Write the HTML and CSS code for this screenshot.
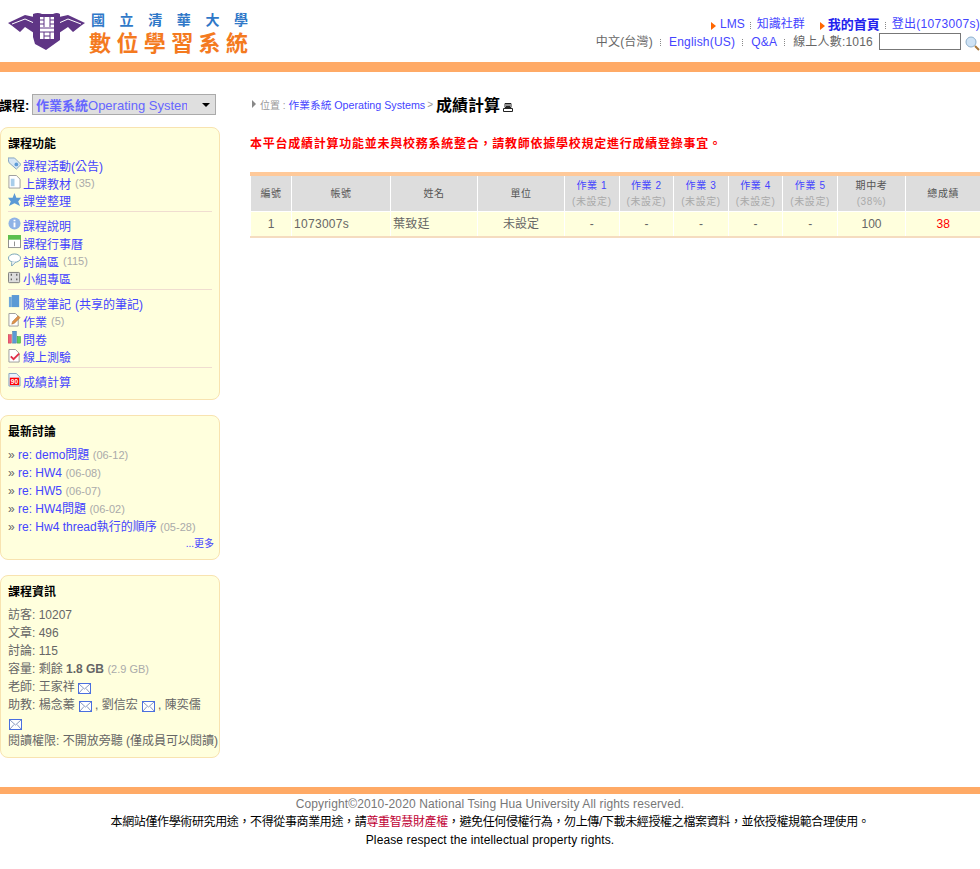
FILE: index.html
```html
<!DOCTYPE html>
<html lang="zh-Hant">
<head>
    <meta charset="UTF-8">
    <title>數位學習系統</title>
    <link rel="stylesheet" href="styles.css">
</head>
<body>
    <svg class="defs" width="0" height="0">
        <symbol id="mail" viewBox="0 0 13 11"><rect x="0.5" y="0.5" width="12" height="10" fill="#fff" stroke="#4a6fe0"/><path d="M1 1l5.500 5 5.500-5M1 10l4-4.500M12 10l-4-4.500" fill="none" stroke="#8a9ac0"/></symbol>
        <symbol id="arrow" viewBox="0 0 5 8"><path d="M0 0l5 4-5 4z" fill="#ff6600"/></symbol>
    </svg>

    <!-- header -->
    <div class="header">
        <div class="logo">
            <svg class="logo-mark" width="78" height="38" viewBox="0 0 78 38">
                <path d="M0 10L17 2 26 4V20L17 14 12 19 3 12z" fill="#5f3585"/>
                <path d="M77 10L60 2 51 4V20L60 14 65 19 74 12z" fill="#5f3585"/>
                <path d="M4 11L17 6 26 10M73 11L60 6 51 10" fill="none" stroke="#fff"/>
                <path d="M25 1Q30 -1 34 1H45Q49 -1 52 1V27L38 37 27 31 25 24z" fill="#5f3585"/>
                <rect x="32" y="4" width="14" height="22" fill="#fff"/>
                <path d="M36 4V14M42 4V14M32 7H36M32 11H36M42 7H46M42 11H46M32 15H46M32 19H46M36 19V26M42 19V26M36 23H42" stroke="#5f3585" fill="none"/>
            </svg>
            <div class="logo-text">
                <div class="logo-top"><span>國</span><span>立</span><span>清</span><span>華</span><span>大</span><span>學</span></div>
                <div class="logo-bottom"><span>數</span><span>位</span><span>學</span><span>習</span><span>系</span><span>統</span></div>
            </div>
        </div>
        <div class="top-right">
            <div class="top-line">
                <svg class="top-arrow" width="5" height="8"><use href="#arrow"/></svg>
                <a href="#">LMS</a><i class="dots"></i><a href="#">知識社群</a>
                <svg class="top-arrow second" width="5" height="8"><use href="#arrow"/></svg>
                <a href="#" class="strong">我的首頁</a><i class="dots"></i><a href="#" class="logout">登出(1073007s)</a>
            </div>
            <div class="top-line second-line">
                <span>中文(台灣)</span><i class="dots wide"></i><a href="#">English(US)</a><i class="dots wide"></i><a href="#">Q&amp;A</a><i class="dots wide"></i><span>線上人數:1016</span>
                <input class="search" type="text">
                <svg class="lens" width="15" height="15" viewBox="0 0 15 15"><circle cx="6" cy="6" r="5" fill="#cfe3f5" stroke="#8fb0cc"/><path d="M10 10l4 4" stroke="#a8763a" stroke-width="2"/></svg>
            </div>
        </div>
    </div>
    <div class="orange-bar"></div>

    <div class="page">
        <!-- left column -->
        <div class="sidebar">
            <div class="course-pick">
                <strong>課程:</strong>
                <div class="select"><span class="select-text"><b>作業系統</b>Operating Systems</span><span class="caret"></span></div>
            </div>

            <div class="box">
                <h4>課程功能</h4>
                <ul class="menu">
                    <li><svg class="ico" viewBox="1 1 14 15"><path d="M1 2h7l7 7-5 5-8-7z" fill="#d5e6f5" stroke="#7f9fbf"/><circle cx="10" cy="9" r="2" fill="#5b9ad5"/></svg><a href="#">課程活動(公告)</a></li>
                    <li><svg class="ico" viewBox="1 1 14 15"><path d="M2 1.500h8l4 4v9.500H2z" fill="#fff" stroke="#999"/><rect x="4" y="5" width="4" height="8" fill="#a8cdea"/></svg><a href="#">上課教材</a><span class="count">(35)</span></li>
                    <li class="last"><svg class="ico" viewBox="1 1 14 15"><path d="M8 1l2 5 5 0-3 4 2 5-6-3-6 3 2-5-3-4 5 0z" fill="#5b9ad5"/></svg><a href="#">課堂整理</a></li>
                    <li><svg class="ico" viewBox="1 1 14 15"><circle cx="8" cy="8" r="6.500" fill="#8fb3e6"/><path d="M8 7v5M8 4v1.500" stroke="#fff" stroke-width="2"/></svg><a href="#">課程說明</a></li>
                    <li><svg class="ico" viewBox="1 1 14 15"><rect x="1.500" y="1.500" width="13" height="13" fill="#fff" stroke="#888"/><rect x="1" y="1" width="14" height="5" fill="#5cc04c"/><path d="M8 8v5" stroke="#888"/></svg><a href="#">課程行事曆</a></li>
                    <li><svg class="ico" viewBox="1 1 14 15"><ellipse cx="8" cy="6.500" rx="6.500" ry="4.500" fill="#fff" stroke="#6f9fb5"/><path d="M5 11l0 4 4-4" fill="#fff" stroke="#6f9fb5"/></svg><a href="#">討論區</a><span class="count">(115)</span></li>
                    <li class="last"><svg class="ico" viewBox="1 1 14 15"><rect x="1.500" y="2.500" width="12" height="11" rx="1" fill="#ddd" stroke="#777"/><path d="M4 5h1M10 5h1M4 10h1M10 10h1" stroke="#333" stroke-width="2"/></svg><a href="#">小組專區</a></li>
                    <li><svg class="ico" viewBox="1 1 14 15"><path d="M2 3h3v11H2z" fill="#6fa8dc"/><path d="M5 1h8v13H5z" fill="#5b9ad5"/></svg><a href="#">隨堂筆記</a><a href="#" class="shared">(共享的筆記)</a></li>
                    <li><svg class="ico" viewBox="1 1 14 15"><path d="M2 1.500h7l3 3v10.500H2z" fill="#fff" stroke="#999"/><path d="M5 13l1-3 6-6 2 2-6 6z" fill="#e0914a" stroke="#a0682a" stroke-width="0.500"/></svg><a href="#">作業</a><span class="count">(5)</span></li>
                    <li><svg class="ico" viewBox="1 1 14 15"><rect x="1" y="5" width="3.500" height="9" fill="#f0607a" stroke="#b03040" stroke-width="0.500"/><rect x="6" y="1" width="4" height="13" fill="#5b9ad5" stroke="#3a70a0" stroke-width="0.500"/><rect x="11" y="7" width="3.500" height="7" fill="#5fd05a" stroke="#309030" stroke-width="0.500"/></svg><a href="#">問卷</a></li>
                    <li class="last"><svg class="ico" viewBox="1 1 14 15"><path d="M2 1.500h7l4 4v9.500H2z" fill="#fff" stroke="#999"/><path d="M4 9l3 3 6-6" fill="none" stroke="#e0304a" stroke-width="2"/></svg><a href="#">線上測驗</a></li>
                    <li class="end"><svg class="ico" viewBox="1 1 14 15"><path d="M2 1.500h8l4 4v9.500H2z" fill="#eaf3fb" stroke="#7f9fbf"/><rect x="3" y="6" width="10" height="8" fill="#f00"/><text x="8" y="12.500" class="ninety">90</text></svg><a href="#">成績計算</a></li>
                </ul>
            </div>

            <div class="box">
                <h4>最新討論</h4>
                <ul class="news">
                    <li>» <a href="#">re: demo問題</a> <span class="count">(06-12)</span></li>
                    <li>» <a href="#">re: HW4</a> <span class="count">(06-08)</span></li>
                    <li>» <a href="#">re: HW5</a> <span class="count">(06-07)</span></li>
                    <li>» <a href="#">re: HW4問題</a> <span class="count">(06-02)</span></li>
                    <li>» <a href="#">re: Hw4 thread執行的順序</a> <span class="count">(05-28)</span></li>
                </ul>
                <div class="more"><a href="#">...更多</a></div>
            </div>

            <div class="box">
                <h4>課程資訊</h4>
                <div class="info">
                    <div>訪客: 10207</div>
                    <div>文章: 496</div>
                    <div>討論: 115</div>
                    <div>容量: 剩餘 <b>1.8 GB</b> <span class="count">(2.9 GB)</span></div>
                    <div>老師: 王家祥 <svg class="mail" width="13" height="11"><use href="#mail"/></svg></div>
                    <div class="ta">助教: 楊念蓁 <svg class="mail" width="13" height="11"><use href="#mail"/></svg>, 劉信宏 <svg class="mail" width="13" height="11"><use href="#mail"/></svg>, 陳奕儒 <svg class="mail" width="13" height="11"><use href="#mail"/></svg></div>
                    <div class="perm">閱讀權限: 不開放旁聽 (僅成員可以閱讀)</div>
                </div>
            </div>
        </div>

        <!-- main column -->
        <div class="content">
            <div class="crumb">
                <span class="crumb-arrow"></span>
                <span class="crumb-label">位置 :</span>
                <a href="#">作業系統 Operating Systems</a>
                <span class="crumb-label">&gt;</span>
                <span class="crumb-title">成績計算</span>
                <svg class="printer" width="10" height="10" viewBox="0 0 10 10"><path d="M2 .5h6v4H2zM.5 5.500h9v3h-9z" fill="#fff" stroke="#222"/><path d="M3 2h4M3 3.500h4" stroke="#222"/></svg>
            </div>
            <div class="notice">本平台成績計算功能並未與校務系統整合，請教師依據學校規定進行成績登錄事宜。</div>

            <table class="grades">
                <colgroup>
                    <col class="c-no"><col class="c-id"><col class="c-name"><col class="c-unit">
                    <col class="c-hw"><col class="c-hw"><col class="c-hw"><col class="c-hw"><col class="c-hw">
                    <col class="c-mid"><col class="c-total">
                </colgroup>
                <tr>
                    <th>編號</th><th>帳號</th><th>姓名</th><th>單位</th>
                    <th><a href="#">作業 1</a><small>(未設定)</small></th>
                    <th><a href="#">作業 2</a><small>(未設定)</small></th>
                    <th><a href="#">作業 3</a><small>(未設定)</small></th>
                    <th><a href="#">作業 4</a><small>(未設定)</small></th>
                    <th><a href="#">作業 5</a><small>(未設定)</small></th>
                    <th>期中考<small>(38%)</small></th>
                    <th>總成績</th>
                </tr>
                <tr>
                    <td>1</td><td class="left">1073007s</td><td class="left">葉致廷</td><td>未設定</td>
                    <td>-</td><td>-</td><td>-</td><td>-</td><td>-</td>
                    <td>100</td><td class="red">38</td>
                </tr>
            </table>
        </div>
    </div>

    <div class="footer">
        <div class="copy">Copyright©2010-2020 National Tsing Hua University All rights reserved.</div>
        <div class="legal">本網站僅作學術研究用途，不得從事商業用途，請<span class="ip">尊重智慧財產權</span>，避免任何侵權行為，勿上傳/下載未經授權之檔案資料，並依授權規範合理使用。</div>
        <div class="please">Please respect the intellectual property rights.</div>
    </div>
</body>
</html>
```

FILE: styles.css
```css
html, body {
    margin: 0;
    padding: 0;
    overflow: hidden;
}
body {
    font-family: "Liberation Sans", "Noto Sans CJK TC", sans-serif;
    font-size: 12px;
    color: #666;
    background: #fff;
}
a {
    color: #4444ff;
    text-decoration: none;
}
.defs {
    display: block;
    height: 0;
}

/* header */
.header {
    height: 62px;
    display: flex;
    justify-content: space-between;
}
.logo {
    display: flex;
    padding: 13px 0 0 8px;
}
.logo-mark {
    margin-right: 3px;
}
.logo-text {
    font-family: "Noto Sans CJK TC", sans-serif;
    font-weight: bold;
    margin-top: -1px;
    width: 159px;
}
.logo-top, .logo-bottom {
    display: flex;
    justify-content: space-between;
    line-height: 1;
}
.logo-top {
    color: #2f78c8;
    font-size: 14px;
    padding-left: 2px;
    height: 14px;
    margin-bottom: 4px;
}
.logo-bottom {
    color: #f47a1f;
    font-size: 22px;
    height: 22px;
}
.top-right {
    padding-top: 16px;
    text-align: right;
}
.top-line {
    height: 17px;
    line-height: 17px;
    display: flex;
    justify-content: flex-end;
    align-items: center;
}
.second-line {
    height: 18px;
    letter-spacing: 0.2px;
}
.top-arrow {
    margin: 2px 4px 0 0;
}
.top-arrow.second {
    margin: 2px 3px 0 15px;
}
.strong {
    font-weight: bold;
    font-size: 13px;
    color: #2222ee;
}
.logout {
    letter-spacing: 0.3px;
}
.dots {
    display: inline-block;
    width: 1px;
    height: 7px;
    margin: 1px 5px 0;
    border-left: 1px dotted #888;
}
.dots.wide {
    margin: 1px 7px 0 7px;
}
.search {
    box-sizing: border-box;
    width: 82px;
    height: 17px;
    margin: 0 4px 1px 6px;
    padding: 0;
    border: 1px solid #777;
}
.lens {
    margin-top: 3px;
}
.orange-bar {
    height: 10px;
    background: #ffaa66;
}

/* page columns */
.page {
    display: flex;
    height: 715px;
}
.sidebar {
    width: 220px;
    flex: none;
    padding-top: 22px;
}
.content {
    width: 730px;
    margin-left: 30px;
    flex: none;
    padding-top: 21px;
}

/* left column */
.course-pick {
    display: flex;
    align-items: center;
    height: 21px;
    margin-bottom: 12px;
    margin-left: -1px;
}
.course-pick strong {
    color: #000;
    font-size: 13px;
    width: 33px;
}
.select {
    box-sizing: border-box;
    width: 184px;
    height: 21px;
    border: 1px solid #aaa;
    background: #dfdfdf;
    display: flex;
    align-items: center;
    justify-content: space-between;
    padding: 0 5px 0 3px;
}
.select-text {
    width: 151px;
    overflow: hidden;
    white-space: nowrap;
    font-size: 13px;
    color: #6666ff;
}
.caret {
    border: 4px solid transparent;
    border-top: 4px solid #000;
    border-bottom: none;
}
.box {
    box-sizing: border-box;
    width: 220px;
    border: 1px solid #f8e3b0;
    border-radius: 8px;
    background: #ffffdd;
    padding: 8px 7px 0;
    margin-bottom: 15px;
}
.box h4 {
    margin: 0;
    color: #000;
    font-size: 12px;
    line-height: 16px;
    height: 20px;
}
.menu, .news {
    list-style: none;
    margin: 0;
    padding: 0;
}
.menu li {
    display: flex;
    align-items: center;
    height: 18px;
    white-space: nowrap;
}
.menu li.last {
    height: 20px;
    padding-bottom: 2px;
    margin-bottom: 4px;
    box-sizing: border-box;
    border-bottom: 1px solid #f0ddd0;
}
.menu li.end {
    margin-bottom: 9px;
}
.menu .count, .shared {
    margin-left: 4px;
}
.ico {
    width: 13px;
    height: 14px;
    flex: none;
    margin: -2px 2px 0 0;
}
.ninety {
    fill: #fff;
    font-family: "Liberation Sans", sans-serif;
    font-size: 7px;
    font-weight: bold;
    text-anchor: middle;
}
.count {
    color: #aaa;
    font-size: 11px;
}
.news {
    margin-top: 2px;
}
.news li {
    height: 18px;
    line-height: 18px;
    white-space: nowrap;
}
.more {
    text-align: right;
    font-size: 10px;
    height: 23px;
    line-height: 16px;
    margin-right: -2px;
}
.info {
    margin-top: 2px;
}
.info > div {
    line-height: 18px;
    white-space: nowrap;
}
.info > .ta {
    white-space: normal;
    width: 204px;
    height: 37px;
}
.ta .mail {
    margin-right: 3px;
    margin-left: 1px;
}
.info > .perm {
    line-height: 16px;
    margin: 0 -6px 8px 0;
}
.mail {
    vertical-align: -3px;
}
.info b {
    color: #666;
}

/* main column */
.crumb {
    display: flex;
    align-items: center;
    height: 22px;
    font-size: 10.700px;
    white-space: nowrap;
}
.crumb-arrow {
    border-left: 4px solid #888;
    border-top: 4px solid transparent;
    border-bottom: 4px solid transparent;
    margin: 0 4px 0 2px;
}
.crumb-label {
    color: #999;
    margin-right: 3px;
    font-size: 10px;
}
.crumb a {
    margin-right: 2px;
}
.crumb-title {
    color: #000;
    font-size: 16px;
    font-weight: bold;
}
.printer {
    margin: 7px 0 0 3px;
}
.notice {
    color: #f00;
    font-weight: bold;
    font-size: 12px;
    letter-spacing: 0.75px;
    line-height: 16px;
    margin-top: 21px;
    height: 36px;
}
.grades {
    width: 730px;
    table-layout: fixed;
    border-collapse: collapse;
    border-top: 4px solid #ffc999;
    border-bottom: 2px solid #f5dcc0;
}
.c-no { width: 41px; }
.c-id { width: 99px; }
.c-name { width: 87px; }
.c-unit { width: 87px; }
.c-hw { width: 54.600px; }
.c-mid { width: 68px; }
.c-total { width: 75px; }
.grades th, .grades td {
    padding: 0;
    text-align: center;
    border-left: 1px solid #fff;
    overflow: hidden;
}
.grades th {
    height: 35px;
    background: #dddddd;
    color: #555;
    font-size: 10px;
    font-weight: normal;
    letter-spacing: 0.6px;
    line-height: 16px;
    border-bottom: 1px solid #fff;
}
.grades small {
    display: block;
    color: #aaa;
    font-size: 10px;
}
.grades td {
    height: 24px;
    line-height: 14px;
    background: #ffffdd;
}
.grades td.left {
    text-align: left;
    padding-left: 2px;
    letter-spacing: 0.3px;
}
.grades td.red {
    color: #f00;
}

/* footer */
.footer {
    border-top: 7px solid #ffaa66;
    text-align: center;
    color: #000;
    line-height: 18px;
    padding-top: 1px;
}
.footer .copy {
    color: #777;
    letter-spacing: 0.13px;
}
.footer .legal {
    letter-spacing: -0.37px;
    white-space: nowrap;
}
.footer .please {
    letter-spacing: 0.12px;
}
.ip {
    color: #c00033;
}
```
